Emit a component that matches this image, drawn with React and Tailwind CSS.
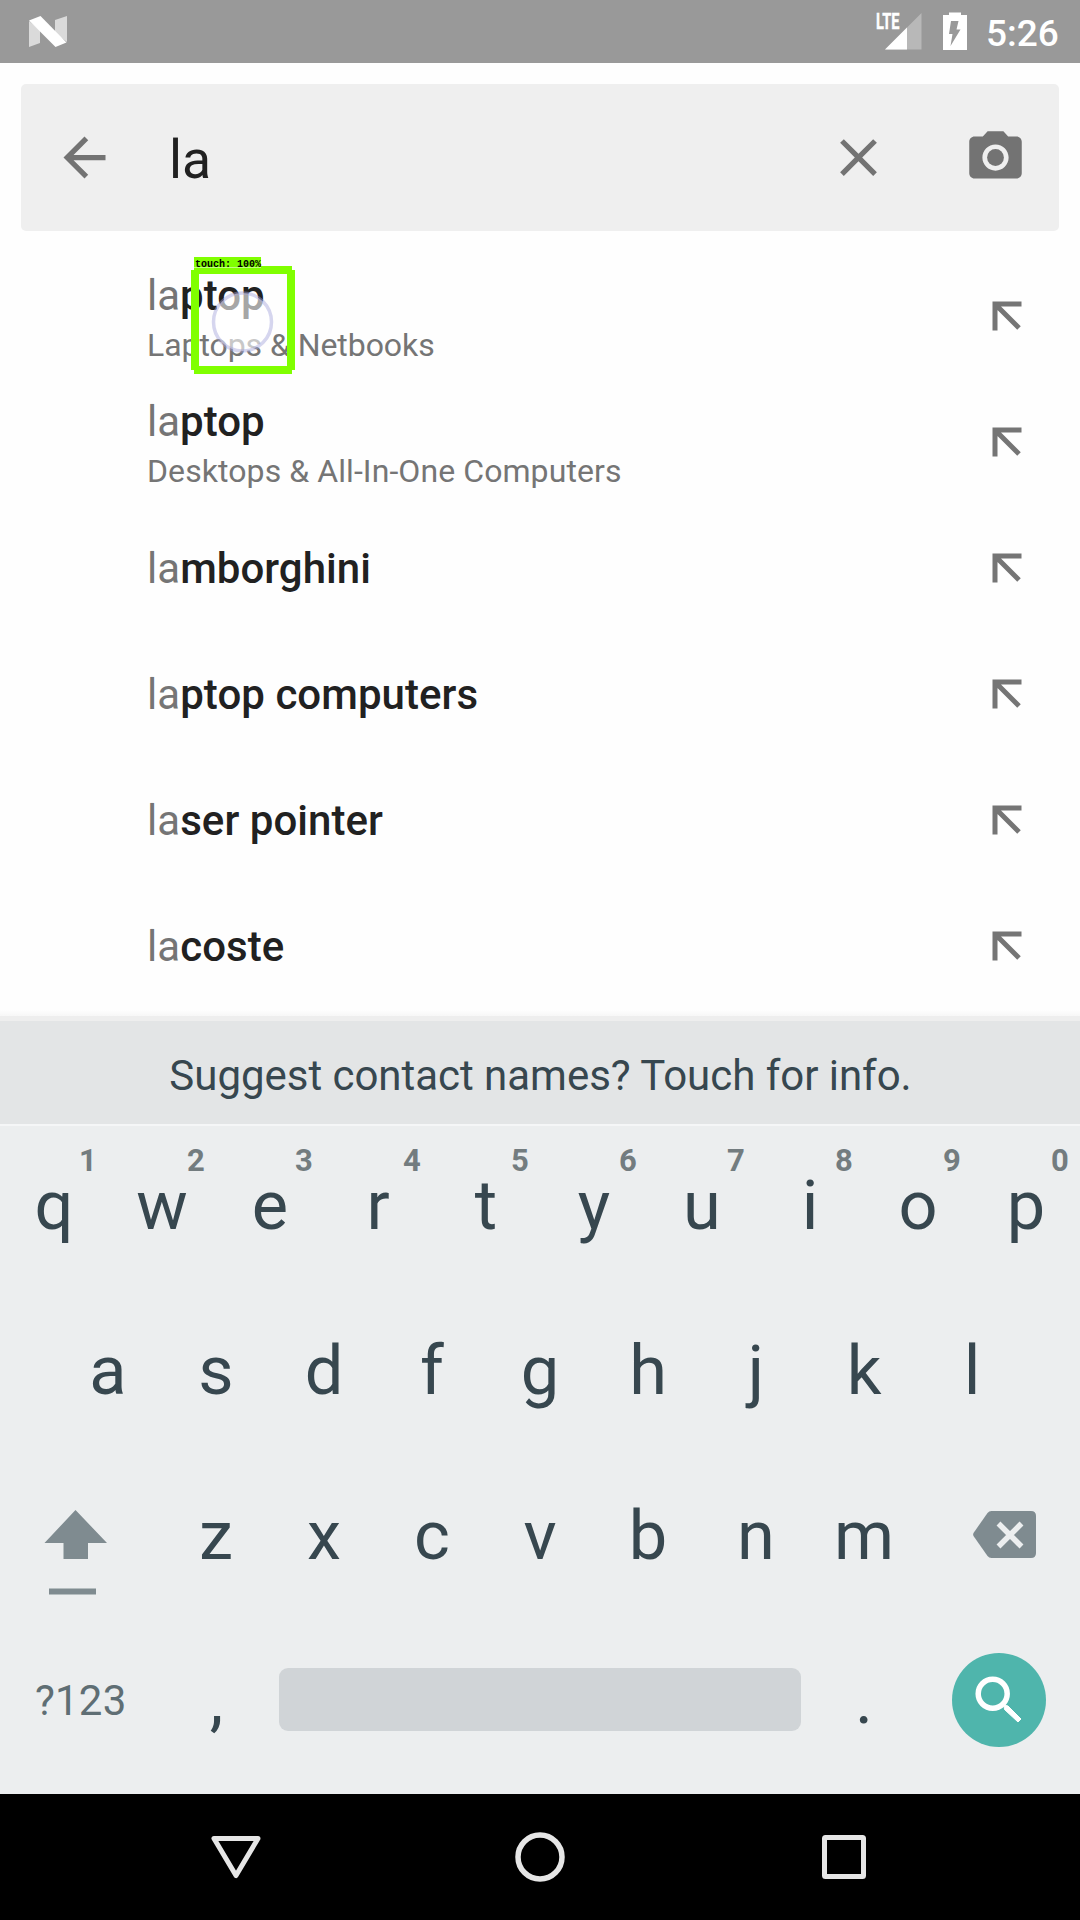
const SUGGESTIONS = [
  { rest: "ptop", category: "Laptops & Netbooks", tight: true },
  { rest: "ptop", category: "Desktops & All-In-One Computers" },
  { rest: "mborghini" },
  { rest: "ptop computers" },
  { rest: "ser pointer" },
  { rest: "coste" },
];

const ROW_ONE = ["q", "w", "e", "r", "t", "y", "u", "i", "o", "p"];
const ROW_TWO = ["a", "s", "d", "f", "g", "h", "j", "k", "l"];
const ROW_THREE = ["z", "x", "c", "v", "b", "n", "m"];

function StatusBar() {
  return (
    <header className="flex h-[63px] items-start bg-[#999999] text-white">
      <svg className="ml-[28px] mt-[15px] h-[33px] w-[40px]" viewBox="28 15 40 33">
        <path d="M29 21 L40 30 V43 L29 47 Z" fill="#dadada" />
        <path d="M55 20 L67 16 V42 L55 33 Z" fill="#dadada" />
        <path d="M29 20.5 L40.5 16 L66.5 42.5 L55.5 47 Z" fill="#fff" />
      </svg>
      <svg className="ml-auto h-[63px] w-[50px]" viewBox="874 0 50 63">
        <path d="M921.5 13 V49.5 H885 Z" fill="#b8b8b8" />
        <path d="M907 27.5 V49.5 H885 Z" fill="#fff" />
        <text x="876" y="29.2" fill="#fff" stroke="#fff" strokeWidth="0.4" fontFamily="Roboto, sans-serif" fontSize="22" fontWeight="700" textLength="23.5" lengthAdjust="spacingAndGlyphs">
          LTE
        </text>
      </svg>
      <svg className="ml-[16px] h-[63px] w-[32px]" viewBox="940 0 32 63">
        <path d="M949 12.5 H961 V15 H967 V50 H943 V15 H949 Z" fill="#fff" />
        <path d="M951 21 H958.500 L956.500 29.500 H960.500 L950.500 46 L952.500 34 H949 Z" fill="#999" />
      </svg>
      <div className="ml-[14px] w-[94px] pt-[2px] text-[37px] font-medium leading-[63px]">5:26</div>
    </header>
  );
}

function SearchBar() {
  return (
    <div className="mx-[21px] mt-[21px] flex h-[147px] items-center rounded-[5px] bg-[#efefef] text-[#737373]">
      <svg className="ml-[32px] size-[63px]" viewBox="0 0 24 24" fill="currentColor">
        <path d="M20 11H7.830l5.590-5.590L12 4l-8 8 8 8 1.410-1.410L7.830 13H20v-2z" />
      </svg>
      <div className="ml-[53px] flex-1 pt-[5px] text-[53.5px] leading-[60px] text-[#212121]">la</div>
      <svg className="size-[63px]" viewBox="0 0 24 24" fill="currentColor">
        <path d="M19 6.410L17.590 5 12 10.590 6.410 5 5 6.410 10.590 12 5 17.590 6.410 19 12 13.410 17.590 19 19 17.590 13.410 12z" />
      </svg>
      <svg className="ml-[74px] mr-[32px] size-[63px]" viewBox="0 0 24 24" fill="currentColor">
        <circle cx="12" cy="12" r="3.200" />
        <path d="M9 2L7.170 4H4c-1.100 0-2 .900-2 2v12c0 1.100.900 2 2 2h16c1.100 0 2-.900 2-2V6c0-1.100-.900-2-2-2h-3.170L15 2H9zm3 15c-2.760 0-5-2.240-5-5s2.240-5 5-5 5 2.240 5 5-2.240 5-5 5z" />
      </svg>
    </div>
  );
}

function Suggestion({ rest, category, tight }) {
  return (
    <li className="flex h-[126px] items-center pl-[147px] pr-[58px]">
      <div className="flex-1 pt-[2px]">
        <div className={category ? "pt-[6px] text-[42px] leading-[50px] text-[#757575]" : "text-[42px] leading-[50px] tracking-[0.05px] text-[#757575]"}>
          la<span className="font-medium text-[#212121]">{rest}</span>
        </div>
        {category && (
          <div className={tight ? "text-[32px] leading-[48px] tracking-[-0.06px] text-[#757575]" : "text-[32px] leading-[48px] tracking-[0.08px] text-[#757575]"}>
            {category}
          </div>
        )}
      </div>
      <svg className="size-[30px]" viewBox="0 0 30 30" fill="none" stroke="#757575" strokeWidth="5">
        <path d="M3 29.500 V3 H29.500 M4 4 L27 27" />
      </svg>
    </li>
  );
}

/* Detection frame drawn over the first suggestion. */
function TouchMarker() {
  return (
    <div className="absolute left-[191px] top-[257px] h-[117px] w-[104px]">
      <div className="absolute left-[3px] top-0 h-[10px] w-[67px] whitespace-pre bg-[#80ff00] pl-px pt-px font-['Liberation_Mono',monospace] text-[10px] font-bold leading-[13px] text-black">
        touch: 100%
      </div>
      <svg className="absolute left-0 top-0 h-[117px] w-[104px]" viewBox="191 257 104 117">
        <circle cx="242.500" cy="322" r="29" fill="#fff" fillOpacity="0.6" stroke="#a4a4dc" strokeOpacity="0.45" strokeWidth="3.500" />
        <path d="M194 267.500 H292 V274 H194 Z M194 366 H292 V374 H194 Z M191 270 H199 V370 H191 Z M287 270 H295 V370 H287 Z M261 266 H292 V268 H261 Z" fill="#80ff00" />
      </svg>
    </div>
  );
}

function Key({ label, hint }) {
  return (
    <div className="relative flex w-[108px] items-center justify-center pb-[4px] text-[68.5px] leading-none">
      {label}
      {hint && (
        <span className="absolute left-[68px] top-[15px] w-[40px] text-center text-[31px] font-bold leading-[40px] text-[#737c7f]">
          {hint}
        </span>
      )}
    </div>
  );
}

function Keyboard() {
  return (
    <section className="bg-[#eceeef] text-[#37474f]">
      <div className="h-[5px] bg-[#eeeeee]" />
      <div className="flex h-[103px] items-center justify-center bg-[#e3e5e6] pl-px pt-[5px] text-[42px] tracking-[-0.03px] text-[#37474f]">
        Suggest contact names? Touch for info.
      </div>
      <div className="h-[2px] bg-[#f5f6f7]" />
      <div className="flex h-[165px]">
        {ROW_ONE.map((k, i) => (
          <Key key={k} label={k} hint={String((i + 1) % 10)} />
        ))}
      </div>
      <div className="flex h-[165px] justify-center">
        {ROW_TWO.map((k) => (
          <Key key={k} label={k} />
        ))}
      </div>
      <div className="flex h-[165px]">
        <svg className="h-[165px] w-[162px]" viewBox="0 1456 162 165" fill="#7f8b90">
          <path d="M75.500 1510 L107 1543 H88 V1559 H63.500 V1543 H44.500 Z" />
          <path d="M49 1588.500 H96 V1594.500 H49 Z" />
        </svg>
        {ROW_THREE.map((k) => (
          <Key key={k} label={k} />
        ))}
        <svg className="h-[165px] w-[162px]" viewBox="918 1456 162 165">
          <path d="M991.500 1511 H1031 Q1036 1511 1036 1516 V1553 Q1036 1558 1031 1558 H991.500 Q989 1558 987.500 1556 L973.500 1536 Q972.800 1534.500 973.500 1533 L987.500 1513 Q989 1511 991.500 1511 Z" fill="#7f8b90" />
          <path d="M998.500 1523.500 L1021.500 1546.500 M1021.500 1523.500 L998.500 1546.500" stroke="#eceeef" strokeWidth="5.500" />
        </svg>
      </div>
      <div className="flex h-[173px]">
        <div className="w-[162px] pl-[35px] pt-[55px] text-[42px] leading-[50px] tracking-[0.2px] text-[#5f6e74]">?123</div>
        <div className="w-[108px] pl-px pt-[39px] text-center text-[68.5px] leading-[80px]">,</div>
        <div className="mx-[9px] mt-[47px] h-[63px] w-[522px] rounded-[9px] bg-[#d0d4d7]" />
        <div className="w-[108px] pt-[39px] text-center text-[68.5px] leading-[80px]">.</div>
        <svg className="h-[173px] w-[162px]" viewBox="918 1621 162 173">
          <circle cx="999" cy="1700" r="47" fill="#4fb5ac" />
          <circle cx="992.700" cy="1693.700" r="14.500" fill="none" stroke="#fff" strokeWidth="5.500" />
          <path d="M1004 1705 L1008 1706 L1021 1719 L1018 1722 L1004.500 1709.500 Z" fill="#fff" stroke="#fff" strokeWidth="1" strokeLinejoin="round" />
        </svg>
      </div>
    </section>
  );
}

function NavigationBar() {
  return (
    <nav className="flex h-[126px] items-center justify-center gap-[240px] bg-black">
      <svg className="size-[64px]" viewBox="204 1825 64 64" fill="none" stroke="#e6e6e6" strokeWidth="5" strokeLinejoin="round">
        <path d="M214 1838.500 H258 L236 1875.500 Z" />
      </svg>
      <svg className="size-[64px]" viewBox="508 1825 64 64" fill="none" stroke="#e6e6e6" strokeWidth="5.500">
        <circle cx="540" cy="1857" r="22" />
      </svg>
      <svg className="size-[64px]" viewBox="812 1825 64 64" fill="none" stroke="#e6e6e6" strokeWidth="5">
        <rect x="824.500" y="1837.500" width="39" height="39" rx="1" />
      </svg>
    </nav>
  );
}

export default function App() {
  return (
    <div className="relative flex h-[1920px] w-[1080px] flex-col overflow-hidden bg-[#fefefe] font-['Roboto',sans-serif]">
      <StatusBar />
      <SearchBar />
      <ul className="mt-[22px] h-[757px]">
        {SUGGESTIONS.map((s, i) => (
          <Suggestion key={i} {...s} />
        ))}
      </ul>
      <div className="h-[6px] bg-linear-to-b from-[#fefefe] to-[#f7f7f7]" />
      <Keyboard />
      <NavigationBar />
      <TouchMarker />
    </div>
  );
}
